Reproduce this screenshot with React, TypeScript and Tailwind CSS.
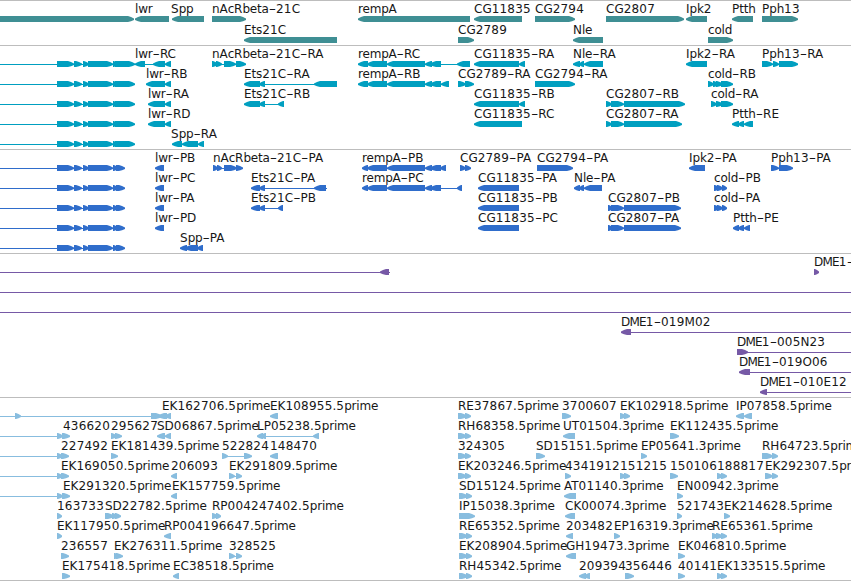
import React from 'react';

type Dir = 'fwd' | 'rev';
type Span = [number, number];

interface Feature {
  label?: string;
  dir: Dir;
  exons: Span[];
  // full extent of the connecting line, defaults to first..last exon
  extent?: Span;
  labelX?: number;
}

interface Track {
  id: string;
  color: string;
  pitch: number;
  height: string;
  rows: Feature[][];
}

const BASELINE = 12;
const GLYPH_TOP = 15;
const HYPHEN_WIDTH = 7.4;

function fwd(label: string, exons: Span[], extra: Partial<Feature> = {}): Feature {
  return { label, dir: 'fwd', exons, ...extra };
}

function rev(label: string, exons: Span[], extra: Partial<Feature> = {}): Feature {
  return { label, dir: 'rev', exons, ...extra };
}

const upstreamR: Feature = fwd('', [[57, 74], [74, 82], [83, 89], [88, 113], [113, 117], [115, 135]], { extent: [0, 134] });
const upstreamP: Feature = fwd('', [[57, 74], [74, 82], [83, 89], [88, 113], [113, 118], [116, 125]], { extent: [0, 124] });
const rempA: Span[] = [[367, 387], [387, 425], [425, 432], [430, 441]];
const est: Span[] = [[458, 467], [465, 471]];
const est2: Span[] = [[459, 468], [466, 472]];

const tracks: Track[] = [
  {
    id: 'gene',
    color: '#3f8f94',
    pitch: 21,
    height: 'h-[44px]',
    rows: [
      [
        fwd('', [[-10, 134]]),
        rev('lwr', [[135, 169]]),
        rev('Spp', [[172, 204]], { labelX: 171 }),
        fwd('nAcRbeta-21C', [[212, 246]]),
        rev('rempA', [[358, 470]]),
        rev('CG11835', [[474, 522]]),
        fwd('CG2794', [[535, 575]]),
        fwd('CG2807', [[606, 684]]),
        rev('Ipk2', [[686, 707]]),
        rev('Ptth', [[732, 753]]),
        fwd('Pph13', [[762, 798]]),
      ],
      [
        rev('Ets21C', [[244, 337]]),
        fwd('CG2789', [[458, 474]]),
        rev('Nle', [[573, 603]]),
        fwd('cold', [[708, 733]]),
      ],
    ],
  },
  {
    id: 'transcript',
    color: '#009fc0',
    pitch: 20,
    height: 'h-[103px]',
    rows: [
      [
        upstreamR,
        rev('lwr-RC', [[135, 145], [153, 165], [165, 171]]),
        fwd('nAcRbeta-21C-RA', [[212, 218], [216, 222], [224, 236], [236, 246]]),
        rev('rempA-RC', [[358, 368], ...rempA, [457, 470]]),
        rev('CG11835-RA', [[474, 519], [519, 525]]),
        rev('Nle-RA', [[573, 580], [579, 584], [584, 603]]),
        rev('Ipk2-RA', [[686, 707]]),
        fwd('Pph13-RA', [[762, 773], [773, 779], [779, 798]]),
      ],
      [
        upstreamR,
        rev('lwr-RB', [[146, 165], [165, 171]]),
        rev('Ets21C-RA', [[244, 260], [259, 265], [314, 337]]),
        rev('rempA-RB', [[358, 368], ...rempA, [441, 449]]),
        fwd('CG2789-RA', [[458, 466], [465, 474]]),
        fwd('CG2794-RA', [[535, 575]]),
        fwd('cold-RB', [[708, 714], [713, 719], [716, 723], [721, 733]]),
      ],
      [
        upstreamR,
        rev('lwr-RA', [[148, 165], [165, 171]]),
        rev('Ets21C-RB', [[244, 260], [259, 265], [278, 284]]),
        rev('CG11835-RB', [[474, 519], [519, 525]]),
        fwd('CG2807-RB', [[606, 612], [611, 624], [624, 685]]),
        fwd('cold-RA', [[711, 717], [716, 723], [721, 733]]),
      ],
      [
        upstreamR,
        rev('lwr-RD', [[148, 165], [165, 171]]),
        rev('CG11835-RC', [[474, 522]]),
        fwd('CG2807-RA', [[606, 612], [611, 624], [624, 682]]),
        rev('Ptth-RE', [[732, 739], [738, 744], [744, 753]]),
      ],
      [upstreamR, rev('Spp-RA', [[172, 182], [182, 198], [198, 204]], { labelX: 171 })],
    ],
  },
  {
    id: 'protein',
    color: '#2f6dcb',
    pitch: 20,
    height: 'h-[103px]',
    rows: [
      [
        upstreamP,
        rev('lwr-PB', [[155, 164]]),
        fwd('nAcRbeta-21C-PA', [[213, 218], [217, 222], [224, 237], [236, 243]]),
        rev('rempA-PB', [[362, 368], ...rempA, [440, 446]]),
        fwd('CG2789-PA', [[460, 466], [465, 471]]),
        fwd('CG2794-PA', [[537, 573]]),
        rev('Ipk2-PA', [[689, 705]]),
        fwd('Pph13-PA', [[771, 779], [779, 793]]),
      ],
      [
        upstreamP,
        rev('lwr-PC', [[155, 164]]),
        rev('Ets21C-PA', [[251, 260], [259, 265], [314, 326]], { extent: [251, 327] }),
        rev('rempA-PC', [[362, 368], ...rempA, [457, 462]]),
        rev('CG11835-PA', [[478, 519]]),
        rev('Nle-PA', [[574, 580], [579, 584], [584, 602]]),
        fwd('cold-PB', [[714, 720], [717, 723], [722, 727]]),
      ],
      [
        upstreamP,
        rev('lwr-PA', [[155, 164]]),
        rev('Ets21C-PB', [[251, 260], [259, 265], [278, 283]]),
        rev('CG11835-PB', [[478, 519]]),
        fwd('CG2807-PB', [[608, 613], [611, 624], [624, 681]]),
        fwd('cold-PA', [[714, 720], [717, 723], [722, 727]]),
      ],
      [
        upstreamP,
        rev('lwr-PD', [[155, 164]]),
        rev('CG11835-PC', [[478, 519]]),
        fwd('CG2807-PA', [[608, 613], [611, 624], [624, 681]]),
        rev('Ptth-PE', [[733, 739], [738, 744], [744, 750]]),
      ],
      [upstreamP, rev('Spp-PA', [[180, 187], [185, 198], [197, 203]])],
    ],
  },
  {
    id: 'bac',
    color: '#7659a6',
    pitch: 20,
    height: 'h-[143px]',
    rows: [
      [rev('', [[380, 389]], { extent: [0, 390] }), fwd('DME1-', [[814, 819]])],
      [rev('', [], { extent: [0, 851] })],
      [rev('', [], { extent: [0, 851] })],
      [rev('DME1-019M02', [[621, 631]], { extent: [621, 851] })],
      [fwd('DME1-005N23', [[737, 748]], { extent: [737, 851] })],
      [rev('DME1-019O06', [[739, 750]], { extent: [739, 851] })],
      [rev('DME1-010E12', [[760, 767]], { extent: [760, 851] })],
    ],
  },
  {
    id: 'est',
    color: '#88bddf',
    pitch: 20,
    height: 'h-[182px]',
    rows: [
      [
        fwd('', [[15, 21], [151, 162]], { extent: [0, 162] }),
        rev('EK162706.5prime', [[158, 167], [165, 171]], { labelX: 162 }),
        rev('EK108955.5prime', [[270, 278]]),
        fwd('RE37867.5prime', est),
        fwd('3700607', [[562, 571]]),
        fwd('EK102918.5prime', [[620, 626], [624, 630]]),
        rev('IP07858.5prime', [[736, 744], [744, 752]]),
      ],
      [
        fwd('436620', [[57, 63], [62, 70]], { extent: [0, 69], labelX: 63 }),
        fwd('295627', [[111, 117], [115, 122]]),
        rev('SD06867.5prime', [[157, 165], [165, 171]]),
        rev('LP05238.5prime', [[257, 263], [260, 266], [313, 319]]),
        fwd('RH68358.5prime', est),
        rev('UT01504.3prime', [[563, 575]]),
        fwd('EK112435.5prime', [[670, 679]]),
      ],
      [
        fwd('227492', [[57, 63], [61, 69]], { extent: [0, 69], labelX: 61 }),
        fwd('EK181439.5prime', [[111, 118]]),
        fwd('522824', [[222, 228], [244, 252]]),
        rev('148470', [[270, 278]]),
        fwd('324305', est),
        fwd('SD15151.5prime', [[536, 545]]),
        fwd('EP05641.3prime', [[641, 647]]),
        fwd('RH64723.5prime', [[762, 773], [772, 778]]),
      ],
      [
        fwd('EK169050.5prime', [[57, 63], [61, 69]], { extent: [0, 69], labelX: 61 }),
        rev('206093', [[171, 177]]),
        fwd('EK291809.5prime', [[229, 235], [236, 242]]),
        fwd('EK203246.5prime', est),
        fwd('4341912', [[565, 571]]),
        fwd('151215', [[620, 626], [624, 630]]),
        fwd('150106', [[670, 678]]),
        fwd('188817', [[717, 723], [721, 727]]),
        fwd('EK292307.5prime', [[765, 773], [772, 778]]),
      ],
      [
        fwd('EK291320.5prime', [[57, 63], [62, 70]], { extent: [0, 70], labelX: 63 }),
        rev('EK157759.5prime', [[171, 177]], { labelX: 172 }),
        fwd('SD15124.5prime', est2),
        rev('AT01140.3prime', [[564, 576]]),
        fwd('EN00942.3prime', [[677, 683]]),
      ],
      [
        fwd('163733', [[57, 62]]),
        fwd('SD22782.5prime', [[105, 114], [112, 118], [115, 121]]),
        fwd('RP004247402.5prime', [[212, 218], [216, 221]]),
        fwd('IP15038.3prime', [[459, 475]]),
        rev('CK00074.3prime', [[565, 575]]),
        fwd('521743', [[677, 682]]),
        fwd('EK214628.5prime', [[724, 730]]),
      ],
      [
        fwd('EK117950.5prime', [[57, 62]]),
        rev('RP004196647.5prime', [[164, 171]]),
        fwd('RE65352.5prime', est2),
        rev('203482', [[566, 573]]),
        fwd('EP16319.3prime', [[614, 620]]),
        fwd('RE65361.5prime', [[712, 718], [716, 723], [721, 727]]),
      ],
      [
        fwd('236557', [[61, 69]]),
        fwd('EK276311.5prime', [[114, 120], [116, 123]]),
        fwd('328525', [[229, 235], [236, 242]]),
        fwd('EK208904.5prime', est2),
        rev('GH19473.3prime', [[566, 576]]),
        fwd('EK046810.5prime', [[678, 685]]),
      ],
      [
        fwd('EK175418.5prime', [[62, 70]]),
        rev('EC38518.5prime', [[173, 179]]),
        fwd('RH45342.5prime', est2),
        rev('209394', [[579, 586], [584, 590]]),
        fwd('356446', [[625, 634]]),
        fwd('40141', [[678, 685]]),
        fwd('EK133515.5prime', [[717, 723], [721, 727]]),
      ],
    ],
  },
];

// Arrow box whose head narrows through a shoulder to a blunt tip,
// so that short exons stay readable.
function arrowPoints([start, end]: Span, dir: Dir, top: number): string {
  const head = Math.min(6, end - start - 1);
  const tip = dir === 'fwd' ? end : start;
  const tail = dir === 'fwd' ? start : end;
  const sign = dir === 'fwd' ? 1 : -1;
  const neck = tip - sign * head;
  const shoulder = neck + sign * head * 0.5;
  return [
    [tail, top],
    [neck, top],
    [shoulder, top + 1],
    [tip, top + 2.5],
    [tip, top + 4],
    [shoulder, top + 5.2],
    [neck, top + 6],
    [tail, top + 6],
  ]
    .map((p) => p.join(','))
    .join(' ');
}

function LabelRun({ run }: { run: string }) {
  if (run === '-') {
    return (
      <tspan textLength={HYPHEN_WIDTH} lengthAdjust="spacingAndGlyphs">
        -
      </tspan>
    );
  }
  if (run === 'DME') return <tspan className="tracking-[-0.8px]">{run}</tspan>;
  if (/^\d/.test(run)) return <tspan className="tracking-[0.2px]">{run}</tspan>;
  if (/^[a-z]/.test(run)) return <tspan className="tracking-[-0.2px]">{run}</tspan>;
  return <tspan>{run}</tspan>;
}

function FeatureGlyph({ feature, y }: { feature: Feature; y: number }) {
  const { label, dir, exons, extent } = feature;
  const from = extent ? extent[0] : exons[0][0];
  const to = extent ? extent[1] : exons[exons.length - 1][1];
  const runs = label ? label.match(/\d+|[a-z]+|-|[^\da-z-]+/g) ?? [] : [];
  return (
    <g>
      {(extent || exons.length > 1) && <rect x={from} y={y + GLYPH_TOP + 3} width={to - from} height={1} />}
      {exons.map((exon) => (
        <polygon key={exon[0]} points={arrowPoints(exon, dir, y + GLYPH_TOP)} />
      ))}
      {label && (
        <text x={feature.labelX ?? from} y={y + BASELINE} className="fill-neutral-900">
          {runs.map((run, i) => (
            <LabelRun key={i} run={run} />
          ))}
        </text>
      )}
    </g>
  );
}

function TrackPanel({ track }: { track: Track }) {
  return (
    <section className={`border-t border-[#bdbdbd] box-content ${track.height}`}>
      <svg className="block h-full w-full overflow-hidden" fill={track.color}>
        {track.rows.map((row, r) =>
          row.map((feature, i) => <FeatureGlyph key={`${r}-${i}`} feature={feature} y={r * track.pitch} />)
        )}
      </svg>
    </section>
  );
}

export default function App() {
  return (
    <main className="flex h-[581px] w-[851px] flex-col overflow-hidden border-b border-[#bdbdbd] bg-white font-['DejaVu_Sans',sans-serif] text-[12px]">
      {tracks.map((track) => (
        <TrackPanel key={track.id} track={track} />
      ))}
    </main>
  );
}
